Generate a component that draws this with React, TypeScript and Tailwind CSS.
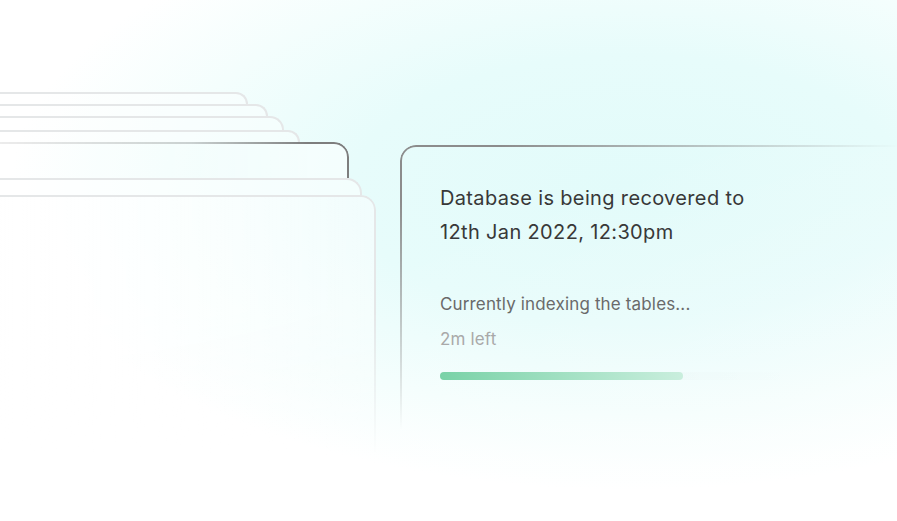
import React from "react";

const stack = [
  { w: "w-[248px]", h: "h-[12px]" },
  { w: "w-[268px]", h: "h-[12px]" },
  { w: "w-[284px]", h: "h-[14px]" },
  { w: "w-[300px]", h: "h-[12px]" },
];

const App = () => {
  return (
    <div
      className="flex h-[521px] w-[897px] overflow-hidden bg-white bg-[radial-gradient(ellipse_620px_300px_at_630px_190px,#e2fbfa_0%,#e7fcfb_45%,#f4fefd_75%,#ffffff_100%)]"
      style={{ fontFamily: "Inter, 'Noto Sans', sans-serif" }}
    >
      {/* stacked cards on the left */}
      <div className="flex w-[376px] shrink-0 flex-col pt-[92px]">
        {stack.map((card, idx) => (
          <div
            key={idx}
            className={`${card.w} ${card.h} shrink-0 rounded-tr-[14px] border-t-2 border-r-2 border-[#e5e7e8] bg-white/40`}
          />
        ))}
        <div className="h-[36px] w-[349px] shrink-0 rounded-tr-[15px] border-t-2 border-r-2 border-[#7e7e7e] bg-white/50 [mask-image:linear-gradient(to_right,rgba(0,0,0,0.15),rgba(0,0,0,0.35)_55%,#000_88%)]" />
        <div className="h-[17px] w-[362px] shrink-0 rounded-tr-[15px] border-t-2 border-r-2 border-[#e5e7e8] bg-white/50" />
        <div className="h-[260px] w-[376px] shrink-0 rounded-tr-[15px] border-t-2 border-r-2 border-[#e5e7e8] bg-[linear-gradient(to_right,rgba(255,255,255,0.85),rgba(255,255,255,0.45))] [mask-image:linear-gradient(to_bottom,#000_45%,transparent)]" />
      </div>

      {/* recovery card */}
      <div className="relative ml-[24px] mt-[145px] h-[340px] flex-1 rounded-tl-[16px] bg-[linear-gradient(160deg,rgba(255,255,255,0)_20%,rgba(255,255,255,0.35))] pl-[40px] pt-[36px]">
        <div className="pointer-events-none absolute inset-0 rounded-tl-[16px] border-t-2 border-l-2 border-[#8c8c8c] [mask-image:radial-gradient(ellipse_500px_285px_at_0_0,#000_20%,transparent_100%)]" />
        <p className="text-[20px] leading-[34px] tracking-[0.35px] text-[#383838]">
          Database is being recovered to
          <br />
          12th Jan 2022, 12:30pm
        </p>
        <p className="mt-[38px] text-[17px] leading-[35px] tracking-[0.15px] text-[#6a6a6a]">
          Currently indexing the tables...
        </p>
        <p className="text-[17px] leading-[35px] tracking-[0.15px] text-[#a9a9a9]">2m left</p>
        <div className="mt-[15px] h-[8px] w-[360px] rounded-full bg-[linear-gradient(to_right,rgba(0,0,0,0.035),rgba(0,0,0,0))]">
          <div className="h-full w-[243px] rounded-full bg-[linear-gradient(to_right,#79d2a7,#c9eedd)]" />
        </div>
      </div>
    </div>
  );
};

export default App;
